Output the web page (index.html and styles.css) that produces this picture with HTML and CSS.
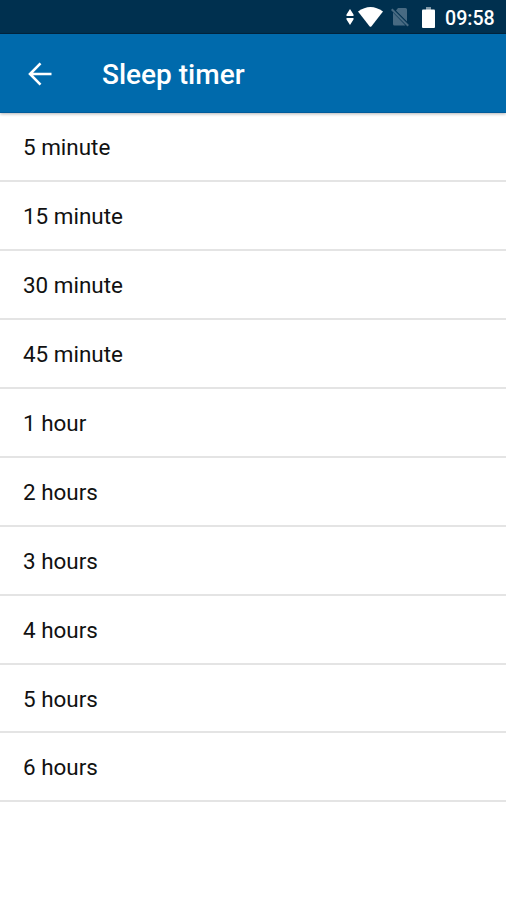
FILE: index.html
```html
<!DOCTYPE html>
<html lang="en">
<head>
<meta charset="utf-8">
<title>Sleep timer</title>
<link rel="stylesheet" href="styles.css">
</head>
<body>
<div class="status">
  <svg class="data" width="8" height="16" viewBox="0 0 8 16"><path d="M4 0l3.5 5.5v1.5h-7V5.500zM4 16l3.500-5.500V9h-7v1.500z"/></svg>
  <svg class="wifi" width="25" height="20" viewBox="0 0 25 20"><path d="M0 4.500Q12.500-4.500 25 4.500L13.500 19.200q-1 1.200-2 0z"/></svg>
  <svg class="sim" width="18" height="20" viewBox="0 0 18 20"><path d="M7 1h7.500q1.500 0 1.500 1.500V14.500L5 3.500zM2 5.500L14.500 18.500H3.500q-1.500 0-1.500-1.500z"/><path class="slash" d="M.7 2.200l16.500 16.500"/></svg>
  <svg class="battery" width="13" height="21" viewBox="0 0 13 21"><path class="cap" d="M4 0h5v3H4z"/><path d="M1 2.500h11q1 0 1 1V20q0 1-1 1H1q-1 0-1-1V3.500q0-1 1-1z"/></svg>
  <span class="clock">09:58</span>
</div>
<header class="bar">
  <svg class="back" width="24" height="24" viewBox="0 0 24 24"><path d="M23.500 12H2M12.500 1.300L2 12l10.500 10.700"/></svg>
  <h1 class="title">Sleep timer</h1>
</header>
<ul class="list">
  <li>5 minute</li>
  <li>15 minute</li>
  <li>30 minute</li>
  <li>45 minute</li>
  <li>1 hour</li>
  <li>2 hours</li>
  <li>3 hours</li>
  <li>4 hours</li>
  <li>5 hours</li>
  <li>6 hours</li>
</ul>
</body>
</html>
```
FILE: styles.css
```css
body { margin: 0; height: 900px; overflow: hidden; background: #fff; font-family: Roboto, sans-serif; }
.status { display: flex; align-items: center; box-sizing: border-box; height: 34px; padding-left: 346px; border-bottom: 1px solid #002540; background: #00304f; color: #fff; fill: #fff; }
.wifi { margin-left: 4px; }
.sim { margin-left: 8px; fill: #486a82; }
.slash { stroke: #486a82; stroke-width: 2; }
.battery { margin: 2px 0 0 13px; }
.cap { fill: #7f97a7; }
.clock { margin: 3px 0 0 10px; font-size: 19.6px; font-weight: 500; }
.bar { display: flex; align-items: center; box-sizing: border-box; height: 79px; padding-left: 28px; border-bottom: 1px solid #005b9b; background: #006aac; box-shadow: 0 1px 3px rgba(0,0,0,.3); position: relative; }
.back { margin-top: 1px; fill: none; stroke: #fff; stroke-width: 2.6; }
.title { margin: 2px 0 0 50px; color: #fff; font-size: 28px; font-weight: 500; }
.list { margin: 0; padding: 0; list-style: none; }
.list li { box-sizing: border-box; height: 68.95px; padding-left: 23px; border-bottom: 2px solid #e4e4e4; color: #111; font-size: 22.45px; line-height: 69px; }
```
